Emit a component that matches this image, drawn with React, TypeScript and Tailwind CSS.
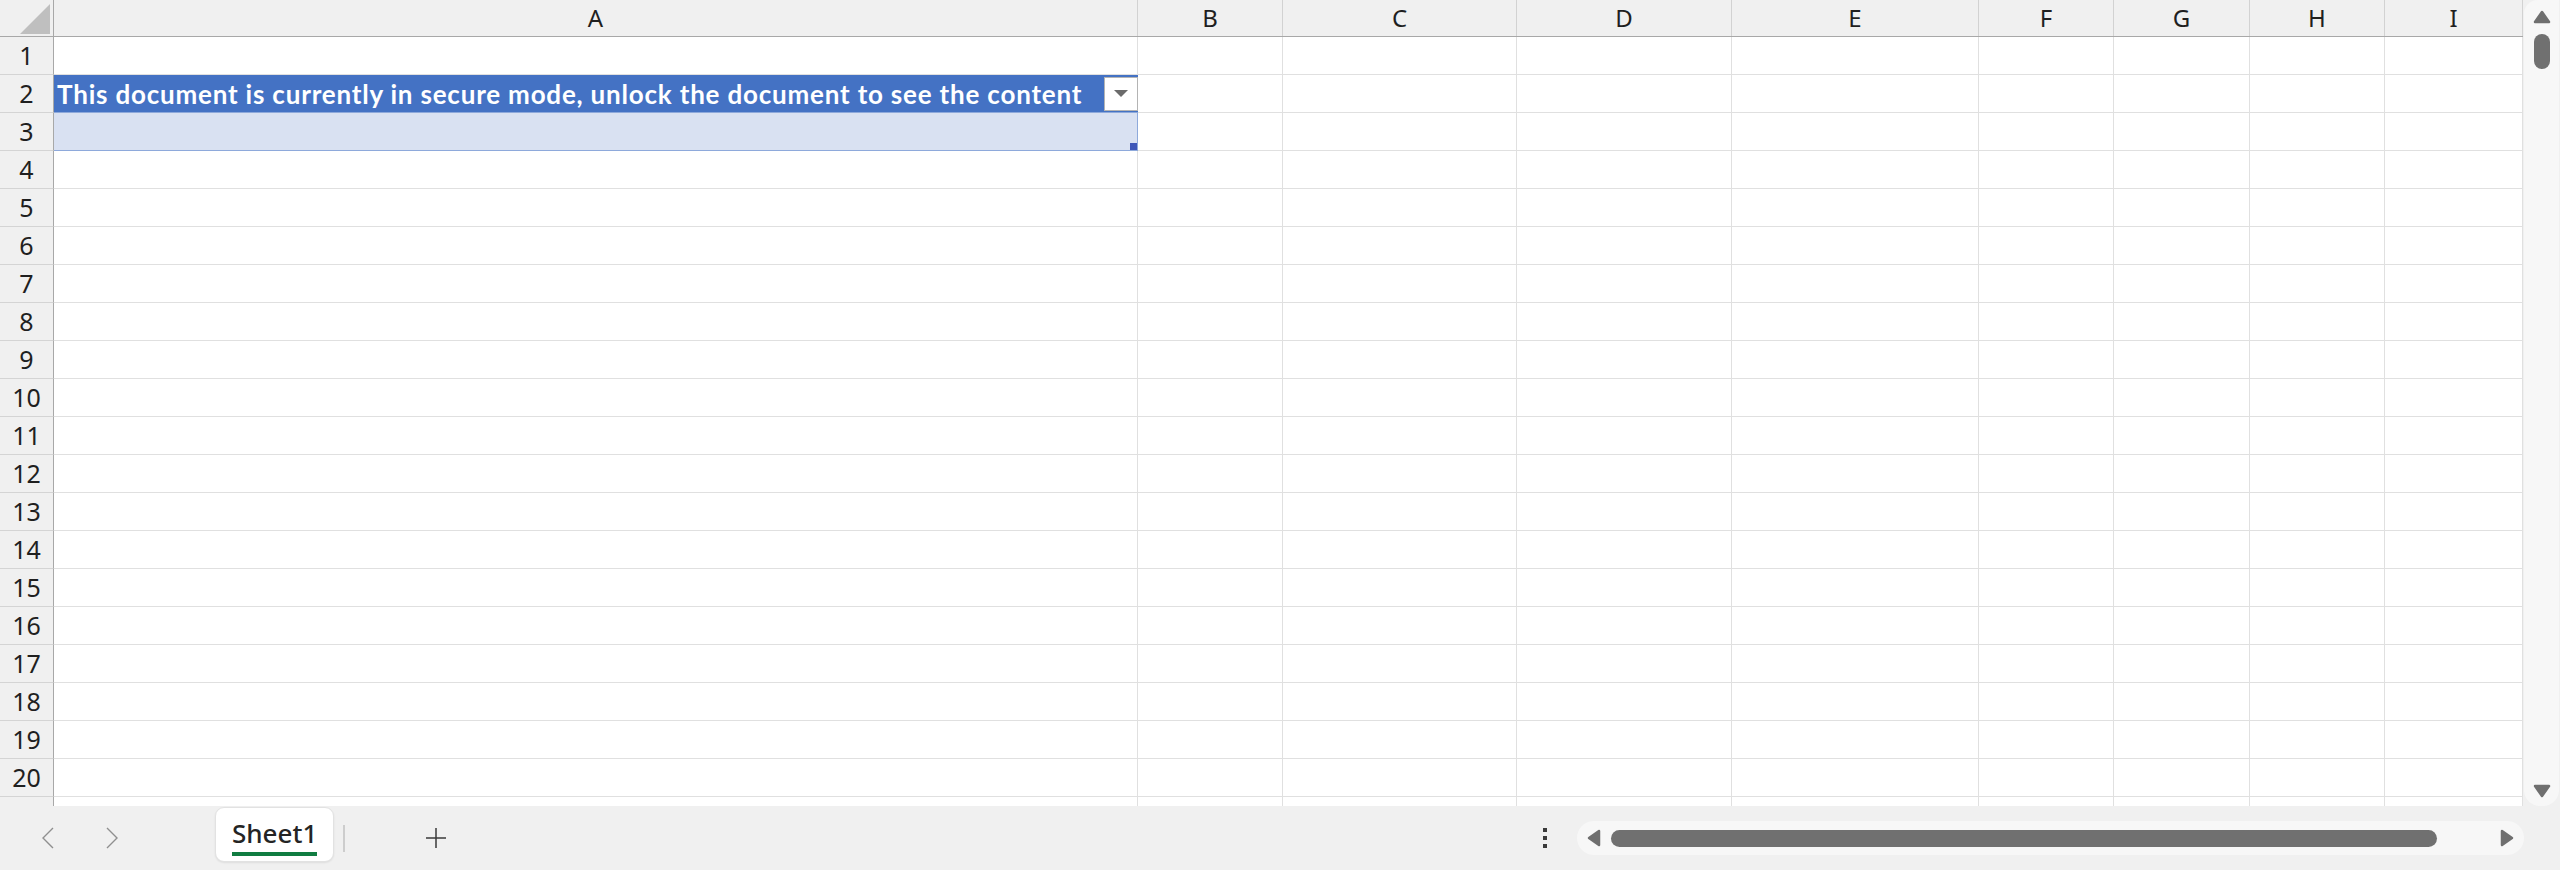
import { ReactNode } from 'react'

// column headers with their widths (px, border included)
const columns = [
  { label: 'A', w: 'w-[1084px]' },
  { label: 'B', w: 'w-[145px]' },
  { label: 'C', w: 'w-[234px]' },
  { label: 'D', w: 'w-[215px]' },
  { label: 'E', w: 'w-[247px]' },
  { label: 'F', w: 'w-[135px]' },
  { label: 'G', w: 'w-[136px]' },
  { label: 'H', w: 'w-[135px]' },
  { label: 'I', w: 'w-[138px]' },
]

// 20 full rows plus the top sliver of row 21
const rows = Array.from({ length: 21 }, (_, i) => i + 1)

const uiFont = "font-['Noto_Sans',sans-serif]"

function Triangle({ dir }: { dir: 'up' | 'down' | 'left' | 'right' }) {
  const pts = {
    up: '2,12 9,2 16,12',
    down: '2,2 9,12 16,2',
    left: '12,2 2,9 12,16',
    right: '2,2 12,9 2,16',
  }[dir]
  const box = dir === 'up' || dir === 'down' ? '0 0 18 14' : '0 0 14 18'
  const size = dir === 'up' || dir === 'down' ? 'w-[18px] h-[14px]' : 'w-[14px] h-[18px]'
  return (
    <svg viewBox={box} className={size}>
      <polygon points={pts} fill="#6f6f6f" stroke="#6f6f6f" strokeWidth="2.5" strokeLinejoin="round" />
    </svg>
  )
}

function RowHeader({ children }: { children?: ReactNode }) {
  return (
    <div className={`w-[54px] shrink-0 h-full bg-[#f0f0f0] border-r border-b border-r-[#a8a8a8] border-b-[#d4d4d4] flex items-center justify-center text-[25px] text-[#1f1f1f] ${uiFont}`}>
      {children}
    </div>
  )
}

function Cell({ w, className = '', children }: { w: string; className?: string; children?: ReactNode }) {
  return (
    <div className={`${w} shrink-0 h-full border-r border-b border-[#e0e0e0] bg-white ${className}`}>
      {children}
    </div>
  )
}

function SheetRow({ n }: { n: number }) {
  return (
    <div className="flex h-[38px] shrink-0">
      <RowHeader>{n <= 20 ? n : null}</RowHeader>
      {columns.map((c, i) => {
        if (i === 0 && n === 2) {
          return (
            <div key={c.label} className={`${c.w} shrink-0 h-full bg-[#4472c4] border-b border-[#8ea9db] flex items-center justify-between pl-[3px]`}>
              <span className="font-['Lato',sans-serif] font-bold text-[26px] tracking-[0.8px] text-white whitespace-nowrap leading-none">
                This document is currently in secure mode, unlock the document to see the content
              </span>
              <button className="w-[34px] h-[34px] bg-white border border-[#b4b4b4] flex items-center justify-center">
                <svg viewBox="0 0 14 8" className="w-[14px] h-[8px]">
                  <polygon points="0,0 14,0 7,7" fill="#6b6b6b" />
                </svg>
              </button>
            </div>
          )
        }
        if (i === 0 && n === 3) {
          return (
            <div key={c.label} className={`${c.w} shrink-0 h-full bg-[#d9e1f2] border-b border-r border-[#8ea9db] relative`}>
              <div className="absolute right-0 bottom-0 w-[7px] h-[7px] bg-[#3f57b8]" />
            </div>
          )
        }
        return <Cell key={c.label} w={c.w} />
      })}
    </div>
  )
}

function VerticalScrollbar() {
  return (
    <div className="w-[35px] ml-[1px] h-[806px] bg-[#f7f7f7] rounded-tl-[14px] rounded-b-[16px] flex flex-col items-center pt-[10px] pb-[8px]">
      <Triangle dir="up" />
      <div className="mt-[10px] w-[16px] h-[35px] rounded-full bg-[#707070]" />
      <div className="flex-1" />
      <Triangle dir="down" />
    </div>
  )
}

function TabBar() {
  return (
    <div className="h-[64px] flex items-center bg-[#f0f0f0]">
      <svg viewBox="0 0 12 22" className="ml-[42px] w-[12px] h-[22px]">
        <polyline points="11,1 1,11 11,21" fill="none" stroke="#8f8f8f" strokeWidth="1.4" />
      </svg>
      <svg viewBox="0 0 12 22" className="ml-[52px] w-[12px] h-[22px]">
        <polyline points="1,1 11,11 1,21" fill="none" stroke="#8f8f8f" strokeWidth="1.4" />
      </svg>

      <div className="self-start mt-[1px] ml-[97px] h-[55px] px-[16px] bg-white rounded-[9px] border border-[#e2e2e2] shadow-[0_1px_2px_rgba(0,0,0,0.08)] flex flex-col items-center pt-[11px]">
        <div className="inline-flex flex-col">
          <span className={`${uiFont} font-medium text-[26px] leading-[28px] text-[#242424]`}>Sheet1</span>
          <div className="mt-[5px] h-[4px] bg-[#107c41]" />
        </div>
      </div>
      <div className="ml-[9px] w-[2px] h-[27px] bg-[#cdcdcd]" />

      <svg viewBox="0 0 22 22" className="ml-[80px] w-[22px] h-[22px]">
        <path d="M11 1v20M1 11h20" stroke="#3a3a3a" strokeWidth="1.5" />
      </svg>

      <div className="flex-1" />

      <div className="w-[4px] flex flex-col gap-[4px]">
        <div className="w-[4px] h-[4px] bg-[#3a3a3a]" />
        <div className="w-[4px] h-[4px] bg-[#3a3a3a]" />
        <div className="w-[4px] h-[4px] bg-[#3a3a3a]" />
      </div>

      <div className="ml-[30px] mr-[36px] w-[947px] h-[34px] rounded-full bg-[#f7f7f7] flex items-center pl-[10px] pr-[10px]">
        <Triangle dir="left" />
        <div className="ml-[10px] w-[826px] h-[17px] rounded-full bg-[#707070]" />
        <div className="flex-1" />
        <Triangle dir="right" />
      </div>
    </div>
  )
}

export default function App() {
  return (
    <div className="w-[2560px] h-[870px] bg-[#f0f0f0] overflow-hidden flex flex-col">
      <div className="flex h-[806px]">
        <div className="w-[2523px] h-[806px] overflow-hidden flex flex-col bg-white">
          <div className="flex h-[37px] shrink-0 bg-[#f0f0f0] border-b border-[#a8a8a8]">
            <div className="w-[54px] shrink-0 h-full border-r border-[#a8a8a8] relative">
              <svg viewBox="0 0 30 30" className="absolute left-[20px] top-[4px] w-[30px] h-[30px]">
                <polygon points="30,0 30,30 0,30" fill="#bfbfbf" />
              </svg>
            </div>
            {columns.map((c) => (
              <div
                key={c.label}
                className={`${c.w} shrink-0 h-full border-r border-[#d2d2d2] flex items-center justify-center text-[24px] text-[#1f1f1f] ${uiFont}`}
              >
                {c.label}
              </div>
            ))}
          </div>
          {rows.map((n) => (
            <SheetRow key={n} n={n} />
          ))}
        </div>
        <VerticalScrollbar />
      </div>
      <TabBar />
    </div>
  )
}
